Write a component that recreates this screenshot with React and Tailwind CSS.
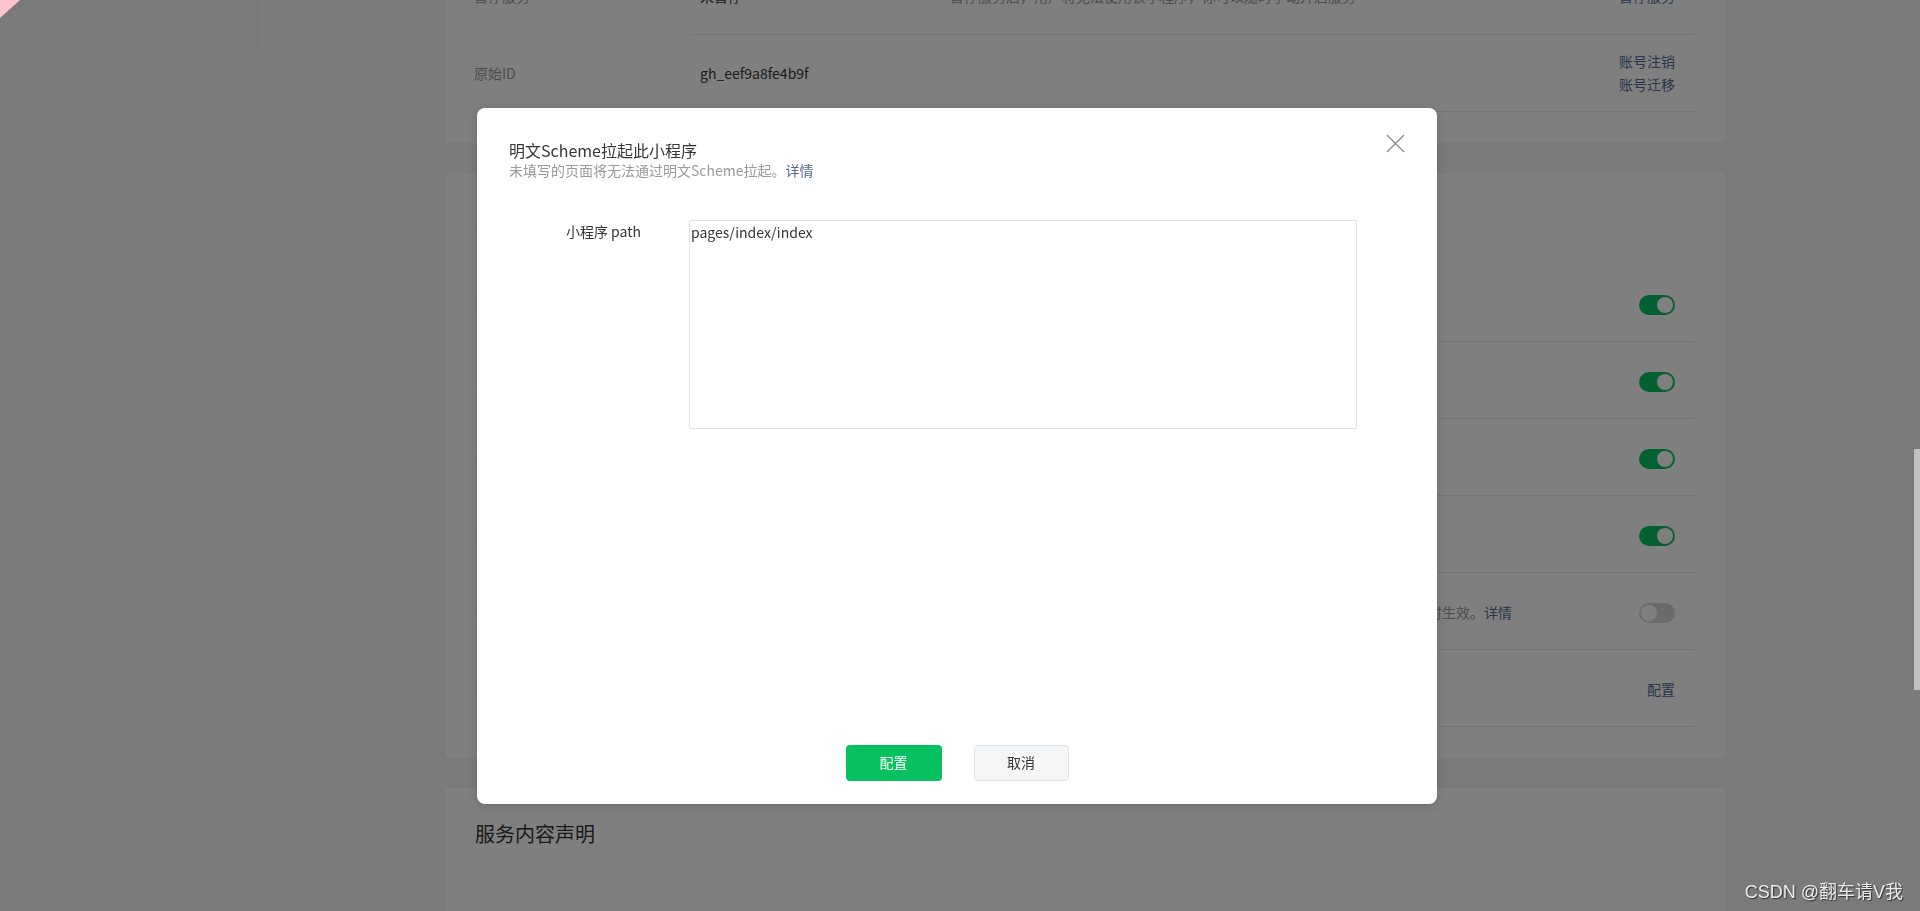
import { useState } from "react";

const toggles = [
  { label: "被搜索", on: true },
  { label: "分享到朋友圈", on: true },
  { label: "获取用户位置", on: true },
  { label: "数据预拉取", on: true },
  {
    label: "数据周期性更新",
    on: false,
    desc: "开启后，用户打开小程序时将提前拉取数据，减少等待时间；关闭后将不再预先拉取，该设置将在用户下次打开小程序时生效。",
  },
];

function Toggle({ on }) {
  return (
    <div
      className={
        on
          ? "w-[36px] h-[20px] rounded-full bg-[#07c160] flex items-center justify-end px-[2px] mt-[3px]"
          : "w-[36px] h-[20px] rounded-full bg-[#d6d6d6] flex items-center justify-start px-[2px] mt-[3px]"
      }>
      <div className="w-[16px] h-[16px] rounded-full bg-white" />
    </div>
  );
}

export default function App() {
  const [path, setPath] = useState("pages/index/index");

  return (
    <div className="relative w-full h-[911px] overflow-hidden bg-[#f4f4f4] text-[14px] text-[#353535] font-['Noto_Sans_CJK_SC',sans-serif]">
      <div className="flex">
        {/* sidebar */}
        <div className="w-[258px] shrink-0">
          <div className="h-[53px] border-r border-[#e6e6e6]" />
        </div>

        {/* main */}
        <div className="pl-[187px] flex flex-col gap-[30px]">
          {/* card 1 */}
          <div className="w-[1280px] bg-white rounded-[4px] mt-[-42px] pl-[29px] pr-[30px] pb-[31px]">
            <div className="flex h-[77px]">
              <div className="w-[217px] flex items-center text-[#9a9a9a]">暂停服务</div>
              <div className="flex-1 flex items-center border-b border-[#e6e6e6] pl-[9px] pr-[20px]">
                <div className="w-[250px]">未暂停</div>
                <div className="flex-1 text-[#9a9a9a]">暂停服务后，用户将无法使用该小程序，你可以随时手动开启服务</div>
                <a className="text-[#576b95]">暂停服务</a>
              </div>
            </div>
            <div className="flex h-[77px]">
              <div className="w-[217px] flex items-center text-[#9a9a9a]">原始ID</div>
              <div className="flex-1 flex items-center border-b border-[#e6e6e6] pl-[9px] pr-[20px]">
                <div className="flex-1">gh_eef9a8fe4b9f</div>
                <div className="flex flex-col leading-[23px] text-[#576b95]">
                  <a>账号注销</a>
                  <a>账号迁移</a>
                </div>
              </div>
            </div>
          </div>

          {/* card 2 */}
          <div className="w-[1280px] bg-white rounded-[4px] pl-[31px] pr-[30px] pt-[33px] pb-[31px]">
            <div className="text-[20px] leading-[28px] mb-[31px]">服务设置</div>
            {toggles.map((t) => (
              <div key={t.label} className="flex h-[77px]">
                <div className="w-[215px] flex items-center text-[#9a9a9a]">{t.label}</div>
                <div className="flex-1 flex items-center border-b border-[#e6e6e6] pl-[9px] pr-[20px]">
                  <div className="flex-1 text-[#9a9a9a] mt-[3px]">
                    {t.desc}
                    {t.desc && <a className="text-[#576b95]">详情</a>}
                  </div>
                  <Toggle on={t.on} />
                </div>
              </div>
            ))}
            <div className="flex h-[77px]">
              <div className="w-[215px] flex items-center text-[#9a9a9a]">明文Scheme拉起此小程序</div>
              <div className="flex-1 flex items-center border-b border-[#e6e6e6] pl-[9px] pr-[20px]">
                <div className="flex-1" />
                <a className="text-[#576b95] mt-[3px]">配置</a>
              </div>
            </div>
          </div>

          {/* card 3 */}
          <div className="w-[1280px] h-[300px] bg-white rounded-[4px] pl-[30px] pr-[30px] pt-[32px]">
            <div className="text-[20px] leading-[28px]">服务内容声明</div>
          </div>
        </div>
      </div>

      {/* mask */}
      <div className="fixed inset-0 bg-black/50" />

      {/* dialog */}
      <div className="fixed inset-0 flex items-center justify-center pr-[6px]">
        <div className="relative w-[960px] h-[696px] bg-white rounded-[8px] shadow-[0_2px_12px_rgba(0,0,0,0.15)] flex flex-col pl-[32px] pr-[32px] pt-[32px] pb-[23px]">
          <button className="absolute top-[26px] right-[32px] w-[19px] h-[19px]">
            <svg width="19" height="19" viewBox="0 0 19 19">
              <path d="M1 1 L18 18 M18 1 L1 18" stroke="#8a8a8a" strokeWidth="1.3" fill="none" />
            </svg>
          </button>

          <div className="text-[16px] leading-[20px] text-[#353535]">明文Scheme拉起此小程序</div>
          <div className="text-[14px] leading-[20px] text-[#9a9a9a]">
            未填写的页面将无法通过明文Scheme拉起。<a className="text-[#576b95]">详情</a>
          </div>

          <div className="flex mt-[40px]">
            <label className="w-[132px] text-right pt-[1px] leading-[20px]">小程序 path</label>
            <textarea
              value={path}
              onChange={(e) => setPath(e.target.value)}
              className="ml-[48px] w-[668px] h-[209px] border border-[#e3e3e3] rounded-[2px] pl-[1px] pt-[1px] leading-[20px] text-[14px] text-[#353535] resize-none outline-none"
            />
          </div>

          <div className="flex-1" />

          <div className="flex justify-center gap-[32px]">
            <button className="w-[96px] h-[36px] rounded-[4px] bg-[#07c160] text-white">配置</button>
            <button className="w-[95px] h-[36px] rounded-[4px] bg-[#f5f6f7] border border-[#e2e3e5] text-[#353535]">取消</button>
          </div>
        </div>
      </div>

      {/* top-left corner mark */}
      <svg className="absolute top-0 left-0" width="21" height="19" viewBox="0 0 21 19">
        <polygon points="0,0 20,0 0,18" fill="#ffc4cd" />
      </svg>

      {/* scrollbar thumb */}
      <div className="absolute right-0 top-[449px] w-[6px] h-[241px] bg-[#c1c1c1]" />

      {/* watermark */}
      <div className="absolute right-[17px] bottom-[7px] text-[18px] leading-[24px] text-[#ececec] [text-shadow:1px_1px_1px_rgba(0,0,0,0.6)] font-['Liberation_Sans','Noto_Sans_CJK_SC',sans-serif]">
        CSDN @翻车请V我
      </div>
    </div>
  );
}
